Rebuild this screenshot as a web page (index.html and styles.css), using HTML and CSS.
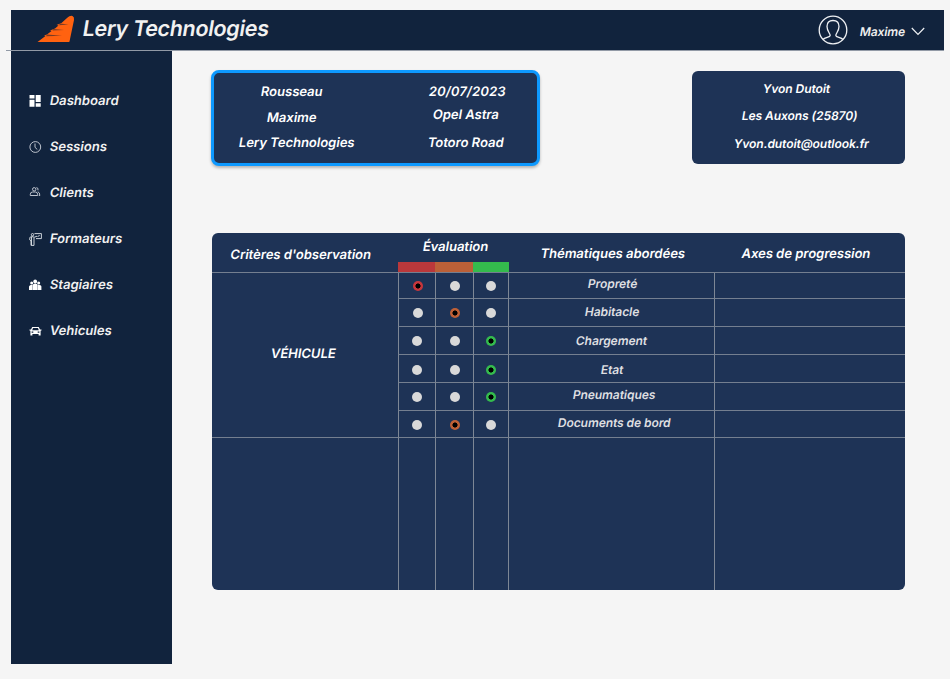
FILE: index.html
```html
<!DOCTYPE html>
<html lang="fr">
<head>
<meta charset="utf-8">
<title>Lery Technologies</title>
<link rel="stylesheet" href="styles.css">
</head>
<body>
<header class="topbar">
  <svg class="logo" width="38" height="28" viewBox="0 0 38 28"><path fill="#ff6210" d="M0.500 27L8.500 21L7 20.500L10 19.500L14.500 16L13 15.500L18 13.500L21.500 10.500L19.500 10L24.500 8L30 3Q33 .3 35.500 1Q37.500 2 37 5L32.500 26.500Q32 27 31.500 27Z"/><path fill="#7b3b24" d="M23 8.500L31.500 9.500L22 10.200ZM16.500 13.900L27 15L15.500 15.600ZM10 19.500L25 20.800L9 21.200Z"/></svg>
  <h1 class="brand"><span>Lery Technologies</span></h1>
  <div class="account">
    <svg class="avatar" width="30" height="30" viewBox="0 0 30 30" fill="none" stroke="#eef0f3" stroke-width="1.300"><circle cx="15" cy="15" r="13.800"/><path d="M5 24.500C7 22.200 12.200 22.500 12.200 20.500C12.200 18.500 9 16 9 11.500C9 7.500 11.500 5.500 15 5.500S21 7.500 21 11.500C21 16 17.800 18.500 17.800 20.500C17.800 22.500 23 22.200 25 24.500"/></svg>
    <span class="user">Maxime</span>
    <svg class="chevron" width="14" height="9" viewBox="0 0 14 9" fill="none" stroke="#eef0f3" stroke-width="1.200"><path d="M.8 1L7 7.500L13.200 1"/></svg>
  </div>
</header>
<div class="body">
  <nav class="sidebar">
    <a class="item"><svg width="13" height="12" viewBox="0 0 13 12" fill="#fff"><path d="M.5 0h5v3.500h-5zM.5 4.800h5v7h-5zM6.700 0h5v7h-5zM6.700 8.200h5v3.600h-5z"/></svg><span>Dashboard</span></a>
    <a class="item"><svg width="13" height="12" viewBox="0 0 13 12" fill="none" stroke="#cfd4dc" stroke-width=".9"><circle cx="6.300" cy="6" r="5.400"/><path d="M6 2.500V6.300L8.300 8.500"/></svg><span>Sessions</span></a>
    <a class="item"><svg class="raise" width="13" height="12" viewBox="0 0 13 12" fill="none" stroke="#cfd4dc" stroke-width=".9"><circle cx="5.200" cy="3.300" r="1.700"/><path d="M1.300 9.500V8.300Q1.300 6 3.600 6H6.400Q8.600 6 8.600 8.300V9.500ZM7.400 1.600Q9.500 1.700 9 4.300M8.800 5.700Q11 6.500 10.800 9.500H9.800"/></svg><span>Clients</span></a>
    <a class="item"><svg width="13" height="13" viewBox="0 0 13 13" fill="none" stroke="#dfe3e8" stroke-width=".9"><circle cx="3.500" cy="1.700" r="1.200"/><path d="M5.500 .6H12.400V5.600H7M8.500 3.500L10.700 2.500M2 12.400V8L.8 7V4.500L2.500 3.500L5.300 4.200L8 3.200M5 12.400V4.500M2.500 4V12M2 12.400H5"/></svg><span>Formateurs</span></a>
    <a class="item"><svg width="13" height="12" viewBox="0 0 13 12" fill="#fff"><circle cx="6.200" cy="2.500" r="1.900"/><circle cx="2.700" cy="3.900" r="1.500"/><circle cx="9.700" cy="3.900" r="1.500"/><path d="M3.700 11V6Q4 4.500 6.200 4.500T8.700 6V11ZM0 11V7.500Q.3 5.700 3.400 5.700V11ZM9 11V5.700Q12.200 5.700 12.400 7.500V11Z"/></svg><span>Stagiaires</span></a>
    <a class="item"><svg width="13" height="12" viewBox="0 0 13 12" fill="#fff" fill-rule="evenodd"><path d="M3.200 2H9.800L11 4.600L12.500 4.500V5.500L11.600 5.700V10.500H9.600V9H3.400V10.500H1.400V5.700L.5 5.500V4.500L2 4.600ZM4 3.100L3.200 5.200H9.800L9 3.100ZM2.600 6.500V7.700H4.300V6.500ZM8.700 6.500V7.700H10.400V6.500Z"/></svg><span>Vehicules</span></a>
  </nav>
  <main class="content">
    <div class="cards">
      <section class="card session">
        <div class="col person"><span>Rousseau</span><span>Maxime</span><span class="company">Lery Technologies</span></div>
        <div class="col drive"><span class="date">20/07/2023</span><span>Opel Astra</span><span>Totoro Road</span></div>
      </section>
      <section class="card contact"><span>Yvon Dutoit</span><span class="city">Les Auxons (25870)</span><span class="mail">Yvon.dutoit@outlook.fr</span></section>
    </div>
    <section class="table">
      <div class="head criteria"><span>Critères d'observation</span></div>
      <div class="head rating"><span>Évaluation</span><div class="scale"><i class="red"></i><i class="orange"></i><i class="green"></i></div></div>
      <div class="head themes"><span>Thématiques abordées</span></div>
      <div class="head axes"><span>Axes de progression</span></div>
      <div class="group"><span>VÉHICULE</span></div>
      <div class="cell r0"><i class="dot on-red"></i></div><div class="cell r0"><i class="dot"></i></div><div class="cell"><i class="dot"></i></div><div class="cell name t1"><span>Propreté</span></div><div class="cell"></div>
      <div class="cell r0"><i class="dot"></i></div><div class="cell r0"><i class="dot on-orange"></i></div><div class="cell"><i class="dot"></i></div><div class="cell name t2"><span>Habitacle</span></div><div class="cell"></div>
      <div class="cell r1"><i class="dot"></i></div><div class="cell r1"><i class="dot"></i></div><div class="cell r1"><i class="dot on-green"></i></div><div class="cell name t3"><span>Chargement</span></div><div class="cell"></div>
      <div class="cell r2"><i class="dot"></i></div><div class="cell r2"><i class="dot"></i></div><div class="cell r2"><i class="dot on-green"></i></div><div class="cell name t4"><span>Etat</span></div><div class="cell"></div>
      <div class="cell r1"><i class="dot"></i></div><div class="cell r1"><i class="dot"></i></div><div class="cell r1"><i class="dot on-green"></i></div><div class="cell name t5"><span>Pneumatiques</span></div><div class="cell"></div>
      <div class="cell r2"><i class="dot"></i></div><div class="cell r2"><i class="dot on-orange"></i></div><div class="cell r2"><i class="dot"></i></div><div class="cell name t6"><span>Documents de bord</span></div><div class="cell"></div>
      <div class="rest"></div><div class="cell rest"></div><div class="cell rest"></div><div class="cell rest"></div><div class="cell rest"></div><div class="cell rest"></div>
    </section>
  </main>
</div>
</body>
</html>
```
FILE: styles.css
```css
* { box-sizing: border-box; }
body { margin: 0; padding: 10px 6px 0 11px; width: 950px; height: 679px; overflow: hidden; background: #f5f5f5; color: #fff; font-family: Inter, sans-serif; font-weight: 600; }
span { display: inline-block; white-space: nowrap; transform: skewX(-9.400deg); }
svg { display: block; flex: none; }
.topbar { display: flex; align-items: center; height: 41px; margin-left: -5px; padding-left: 31px; background: linear-gradient(90deg, #f5f5f5 5px, #11233d 5px) 0 0 / 100% 40px no-repeat #929aa6; }
.logo { margin-top: -4px; }
.brand { margin: -6px 0 0 8px; font-size: 21.500px; letter-spacing: -.31px; line-height: 28px; font-weight: 600; color: #f1f1f1; white-space: nowrap; }
.account { display: flex; align-items: center; margin-left: auto; margin-right: 19px; }
.avatar { margin-top: -1px; }
.user { width: 50px; margin: 2px 0 0 12px; font-size: 12px; letter-spacing: -.1px; color: #eee; }
.chevron { margin: 2px 0 0 1px; }
.body { display: flex; }
.sidebar { display: flex; flex-direction: column; width: 161px; height: 613px; padding: 27px 0 0 18px; background: #11233d; }
.item { display: flex; align-items: center; gap: 8px; height: 46px; font-size: 13px; letter-spacing: .05px; color: #f1f1f1; }
.item span { margin-top: -2px; }
.raise { margin-top: -2px; }
.content { padding: 19px 0 0 40px; }
.cards { display: flex; justify-content: space-between; width: 693px; height: 163px; }
.card { background: #1e3356; border-radius: 6px; }
.session { display: flex; width: 329px; height: 96px; margin-left: -1px; border: 3px solid #0d99ff; border-radius: 8px; box-shadow: 0 2px 3px #0004; font-size: 13px; }
.col { display: flex; flex: none; flex-direction: column; align-items: center; }
.person { width: 166px; padding-top: 6px; line-height: 25.500px; }
.person span:first-child { margin-right: 11px; }
.person span:nth-child(2) { margin-right: 11px; }
.drive { width: 148px; margin-left: 12px; padding-top: 8px; line-height: 20px; }
.drive .date { margin-left: 2px; letter-spacing: .15px; }
.drive span:nth-child(2) { margin-top: 3px; }
.drive span:nth-child(3) { margin-top: 8px; }
.contact { display: flex; flex-direction: column; align-items: center; width: 213px; height: 93px; margin-top: 1px; padding-top: 8px; font-size: 12px; letter-spacing: -.06px; line-height: 20px; }
.contact span:first-child { margin-right: 3px; }
.city { margin: 7px 0 8px 2px; }
.mail { margin-left: 6px; }
.table { display: grid; width: 693px; height: 357px; overflow: hidden; border-radius: 6px; background: #1e3356; grid-template-columns: 186px 37px 38px 35px 206px 191px; grid-template-rows: 40px 26px 28px 28px 28px 28px 27px 1fr; }
.head { display: flex; justify-content: center; border-bottom: 1px solid #747f90; font-size: 13px; line-height: 20px; white-space: nowrap; }
.criteria { padding: 11px 10px 0 0; }
.rating { grid-column: 2 / 5; flex-direction: column; align-items: center; padding-top: 3px; }
.rating span { margin-left: 6px; }
.scale { display: flex; align-self: stretch; margin-top: 6px; height: 10px; }
.scale i { flex: 1; height: 10px; }
.scale .red { flex: 0 0 37px; background: #ba383b; }
.scale .orange { flex: 0 0 38px; background: #bb6038; }
.scale .green { margin-right: -1px; background: #34bb4d; }
.themes { padding: 10px 0 0 2px; }
.axes { padding: 10px 9px 0 0; }
.group { grid-row: 2 / 8; display: flex; align-items: center; justify-content: center; padding: 0 4px 4px 0; border-bottom: 1px solid #747f90; font-size: 13px; }
.cell { display: flex; align-items: center; justify-content: center; border-left: 1px solid #7d8795; border-bottom: 1px solid #747f90; }
.rest { border-bottom: 0; }
.r0 { padding-left: 1px; }
.r1 { padding-top: 1px; }
.r2 { padding-top: 2px; }
.dot { width: 10px; height: 10px; border-radius: 50%; background: #d9d9d9; }
.on-red { background: radial-gradient(circle, #000 2.200px, #c7363b 2.900px); }
.on-orange { background: radial-gradient(circle, #000 2.200px, #bf6036 2.900px); }
.on-green { background: radial-gradient(circle, #000 2.200px, #34bb4d 2.900px); }
.name { font-size: 12px; letter-spacing: -.06px; line-height: 16px; color: #dedfe1; white-space: nowrap; }
.t1 { padding: 0 0 3px 2px; }
.t2 { padding: 0 0 1px 1px; }
.t3 { padding: 1px 0 0; }
.t4 { padding: 2px 0 0 2px; }
.t5 { padding: 0 0 4px 6px; }
.t6 { padding: 0 0 2px 6px; }
```
